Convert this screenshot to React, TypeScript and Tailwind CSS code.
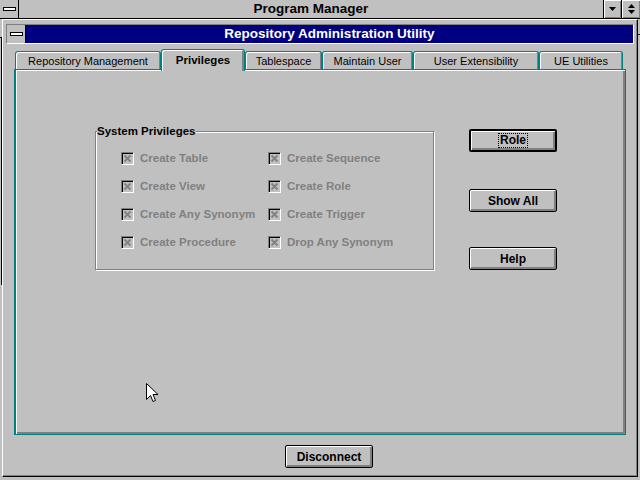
import React from 'react';

const tabs = [
  { label: 'Repository Management', w: 'w-[146px]' },
  { label: 'Privileges', w: 'w-[84px]', active: true },
  { label: 'Tablespace', w: 'w-[77px]' },
  { label: 'Maintain User', w: 'w-[91px]' },
  { label: 'User Extensibility', w: 'w-[126px]' },
  { label: 'UE Utilities', w: 'w-[84px]' },
];

const privileges = [
  'Create Table',
  'Create Sequence',
  'Create View',
  'Create Role',
  'Create Any Synonym',
  'Create Trigger',
  'Create Procedure',
  'Drop Any Synonym',
];

function Dash() {
  return <div className="w-[13px] h-[4px] bg-white border border-black" />;
}

function CheckItem({ label }: { label: string }) {
  return (
    <div className="flex items-center h-[13px]">
      <div className="w-[13px] h-[13px] border border-t-[#808080] border-l-[#808080] border-r-white border-b-white bg-[#c0c0c0] shadow-[inset_1px_1px_0_#000] flex items-center justify-center">
        <svg width="9" height="9" viewBox="0 0 9 9">
          <path d="M1.5 1.5L7.5 7.5M7.5 1.5L1.5 7.5" stroke="#808080" strokeWidth="1.8" />
        </svg>
      </div>
      <span className="ml-[6px] text-[11.5px] font-bold text-[#808080] leading-none whitespace-nowrap">{label}</span>
    </div>
  );
}

function Btn({ children, isDefault }: { children: React.ReactNode; isDefault?: boolean }) {
  return (
    <div
      className={`w-[88px] h-[23px] rounded-[2px] border-black bg-[#c0c0c0] flex items-center justify-center text-[12px] font-bold text-black shadow-[inset_1px_1px_0_#fff,inset_-2px_-2px_0_#808080] ${
        isDefault ? 'border-2' : 'border'
      }`}
    >
      {children}
    </div>
  );
}

export default function App() {
  return (
    <div className="relative w-[640px] h-[480px] overflow-hidden bg-[#c0c0c0] font-['Liberation_Sans',Arial,sans-serif] text-black select-none">
      {/* Program Manager title bar */}
      <div className="flex h-[19px] border-b border-black">
        <div className="w-[19px] border-r border-black flex items-center justify-center">
          <Dash />
        </div>
        <div className="flex-1 text-center text-[13.5px] font-bold leading-[18px]">Program Manager</div>
        <div className="w-[18px] h-[18px] border-l border-black bg-[#c0c0c0] shadow-[inset_1px_1px_0_#fff,inset_-1px_-1px_0_#808080] flex items-center justify-center">
          <svg width="7" height="4" viewBox="0 0 7 4">
            <path d="M0 0H7L3.5 4Z" fill="#000" />
          </svg>
        </div>
        <div className="w-[19px] h-[18px] border-l border-black bg-[#c0c0c0] shadow-[inset_1px_1px_0_#fff,inset_-1px_-1px_0_#808080] flex items-center justify-center">
          <svg width="7" height="10" viewBox="0 0 7 10">
            <path d="M3.5 0L7 4H0Z" fill="#000" />
            <path d="M0 6H7L3.5 10Z" fill="#000" />
          </svg>
        </div>
      </div>

      {/* Dialog window */}
      <div className="ml-[2px] w-[636px] h-[458px] border border-t-white border-l-white border-r-black border-b-black bg-[#c0c0c0] shadow-[inset_-1px_-1px_0_#808080] flex flex-col">
        {/* Title bar */}
        <div className="ml-[3px] mt-[4px] w-[628px] h-[20px] border border-t-[#808080] border-l-[#808080] border-r-white border-b-white flex">
          <div className="w-[19px] h-full border-r border-black flex items-center justify-center">
            <Dash />
          </div>
          <div className="flex-1 bg-[#000080] text-white text-center text-[13.5px] font-bold leading-[18px]">
            Repository Administration Utility
          </div>
        </div>

        {/* Tabs */}
        <div className="ml-[12px] mt-[5px] h-[20px] flex items-end">
          {tabs.map((t) => (
            <div
              key={t.label}
              className={`${t.w} ${
                t.active
                  ? 'h-[22px] mb-[-2px] relative z-10 text-[11.5px] font-bold shadow-[inset_1px_1px_0_#fff,inset_-2px_0_0_#808080]'
                  : 'h-[18px] pt-[1px] text-[11px] shadow-[inset_1px_1px_0_#fff,inset_-1px_0_0_#808080]'
              } border-t border-l border-r border-[#008080] rounded-t-[3px] bg-[#c0c0c0] flex items-center justify-center whitespace-nowrap`}
            >
              {t.label}
            </div>
          ))}
        </div>

        {/* Tab panel */}
        <div className="ml-[11px] w-[612px] h-[366px] border border-l-2 border-[#008080] shadow-[inset_1px_1px_0_#fff,inset_-2px_-2px_0_#808080] flex items-start pl-[79px] pt-[59px]">
          {/* Group box */}
          <div className="relative mt-[2px] w-[339px] h-[139px] border border-[#808080] shadow-[inset_1px_1px_0_#fff,1px_1px_0_#fff]">
            <span className="absolute left-[1px] top-[-8px] bg-[#c0c0c0] pr-[1px] text-[11.5px] font-bold leading-[14px]">
              System Privileges
            </span>
            <div className="grid grid-cols-[147px_auto] gap-y-[15px] pl-[25px] pt-[20px]">
              {privileges.map((p) => (
                <CheckItem key={p} label={p} />
              ))}
            </div>
          </div>

          {/* Buttons */}
          <div className="ml-[35px] flex flex-col">
            <Btn isDefault>
              <span className="border border-dotted border-black px-[1px] leading-[13px]">Role</span>
            </Btn>
            <div className="mt-[37px]">
              <Btn>Show All</Btn>
            </div>
            <div className="mt-[35px]">
              <Btn>Help</Btn>
            </div>
          </div>
        </div>

        <div className="ml-[282px] mt-[10px]">
          <Btn>Disconnect</Btn>
        </div>
      </div>

      {/* Program Manager frame bits behind the dialog */}
      <div className="absolute left-[1px] top-[37px] w-[1px] h-[248px] bg-black" />
      <div className="absolute left-0 top-[37px] w-[2px] h-[1px] bg-black" />
      <div className="absolute right-0 top-[34px] w-[2px] h-[1px] bg-black" />

      {/* Mouse pointer */}
      <svg className="absolute left-[146px] top-[383px]" width="13" height="20" viewBox="0 0 13 20">
        <path d="M0.5 0.5V16.5L4.5 12.5L7 18.5L9.5 17.5L7 11.5H12Z" fill="#fff" stroke="#000" strokeWidth="1" />
      </svg>
    </div>
  );
}
